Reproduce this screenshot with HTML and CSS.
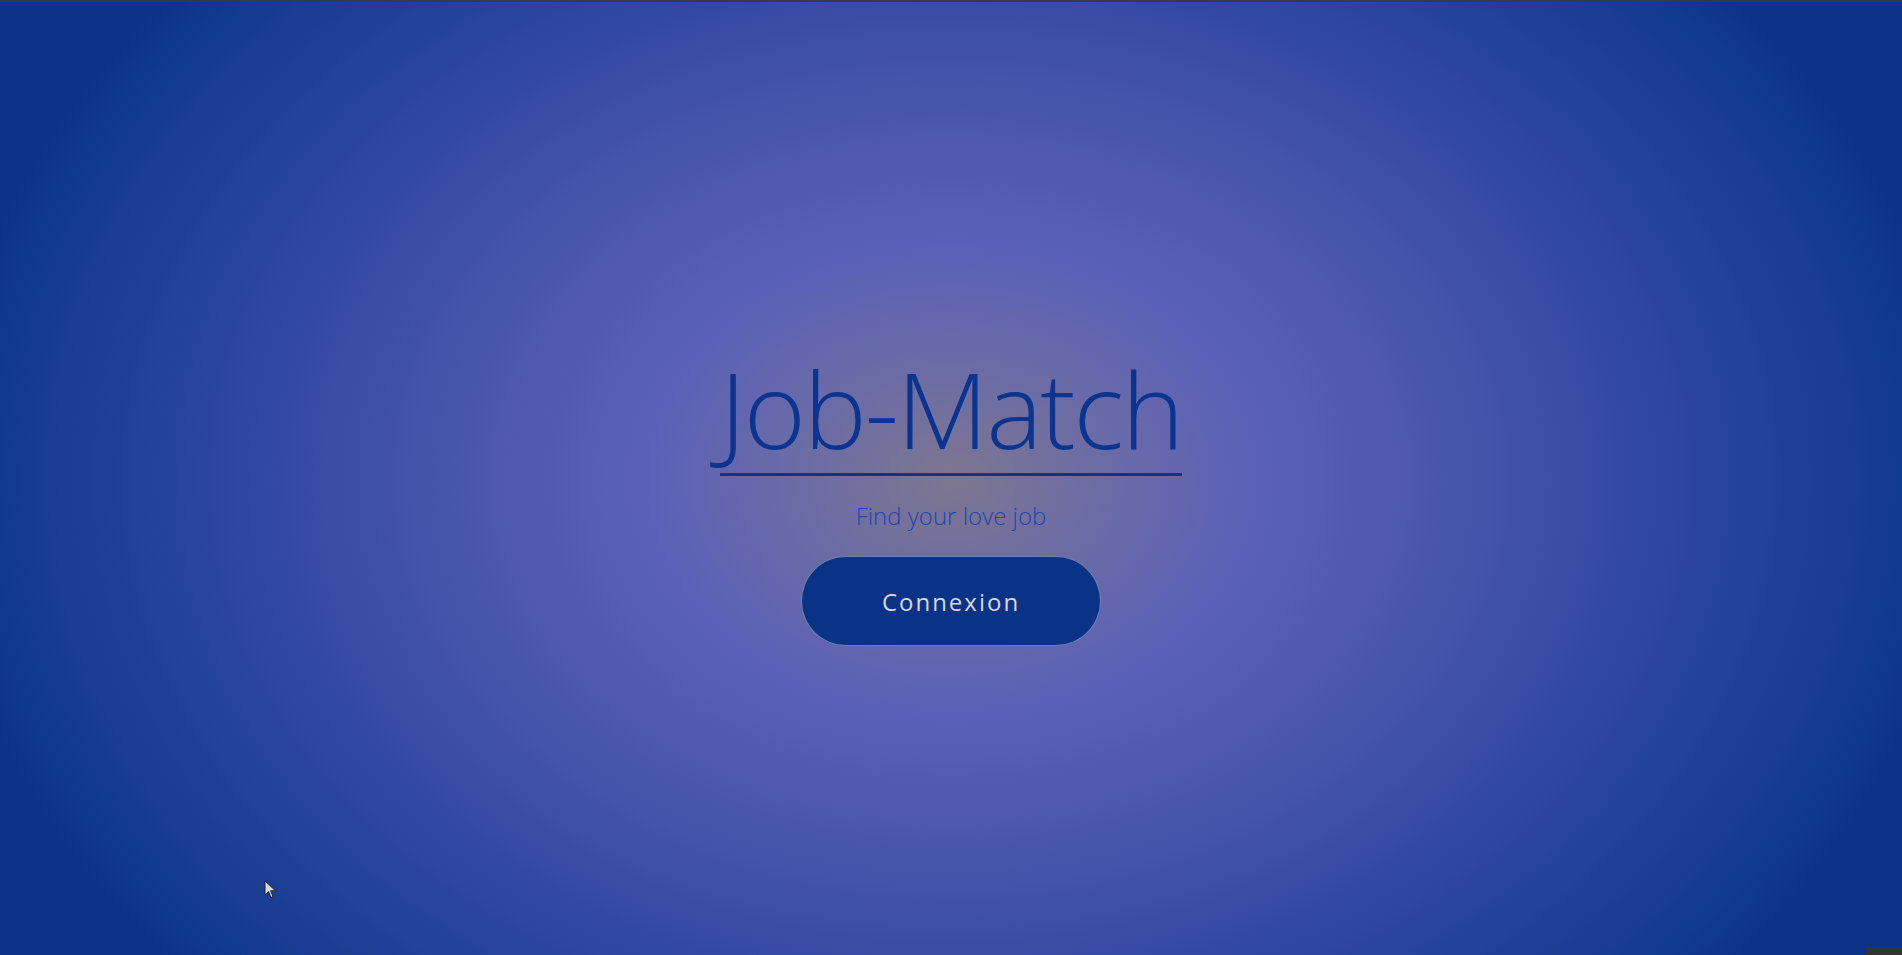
FILE: index.html
```html
<!DOCTYPE html>
<html lang="fr">
<head>
<meta charset="utf-8">
<title>Job-Match</title>
<link rel="stylesheet" href="styles.css">
</head>
<body>
<div class="topbar"></div>
<main class="hero">
  <h1 class="title">Job-Match</h1>
  <p class="tagline">Find your love job</p>
  <button class="cta" type="button">Connexion</button>
</main>
<svg class="cursor" width="14" height="20" viewBox="0 0 14 20" aria-hidden="true">
  <path d="M1 1 L1 15 L4.5 11.5 L7 17.5 L9 16.6 L6.6 10.8 L11.5 10.8 Z" fill="#d9d9d9" stroke="#222" stroke-width="1"/>
</svg>
<div class="corner"></div>
</body>
</html>
```
FILE: styles.css
```css
html, body {
  margin: 0;
  padding: 0;
  height: 100%;
}
body {
  width: 1902px;
  height: 955px;
  overflow: hidden;
  position: relative;
  font-family: "Open Sans", "Noto Sans", sans-serif;
  background: radial-gradient(ellipse 1010px 760px at 951px 480px,
    #7e7790 0%,
    #6c6ca4 14%,
    #5a60b8 31%,
    #4a56ae 48%,
    #2d469e 72%,
    #123a8e 94%,
    #0c3389 100%);
}
.topbar {
  height: 2px;
  background: #3a3a3c;
}
.hero {
  display: flex;
  flex-direction: column;
  align-items: center;
  padding-top: 342px;
}
.title {
  margin: 0;
  font-size: 106px;
  font-weight: 300;
  line-height: 1.22;
  letter-spacing: -2.1px;
  color: #0b3390;
  border-bottom: 3px solid #0b3390;
}
.tagline {
  margin: 26px 0 0;
  font-size: 24px;
  font-weight: 300;
  line-height: 1.2;
  color: #2244b2;
}
.cta {
  margin-top: 25px;
  width: 300px;
  height: 90px;
  border-radius: 45px;
  border: 1px solid rgba(190, 190, 205, 0.55);
  background: #0a3387;
  color: #d8d8d8;
  font-family: "Open Sans", "Noto Sans", sans-serif;
  font-size: 24px;
  font-weight: 500;
  letter-spacing: 2px;
  display: flex;
  align-items: center;
  justify-content: center;
  padding: 0;
}
.cursor {
  position: absolute;
  left: 264px;
  top: 880px;
}
.corner {
  position: absolute;
  right: 0;
  bottom: 0;
  width: 36px;
  height: 8px;
  background: #333336;
}
```
